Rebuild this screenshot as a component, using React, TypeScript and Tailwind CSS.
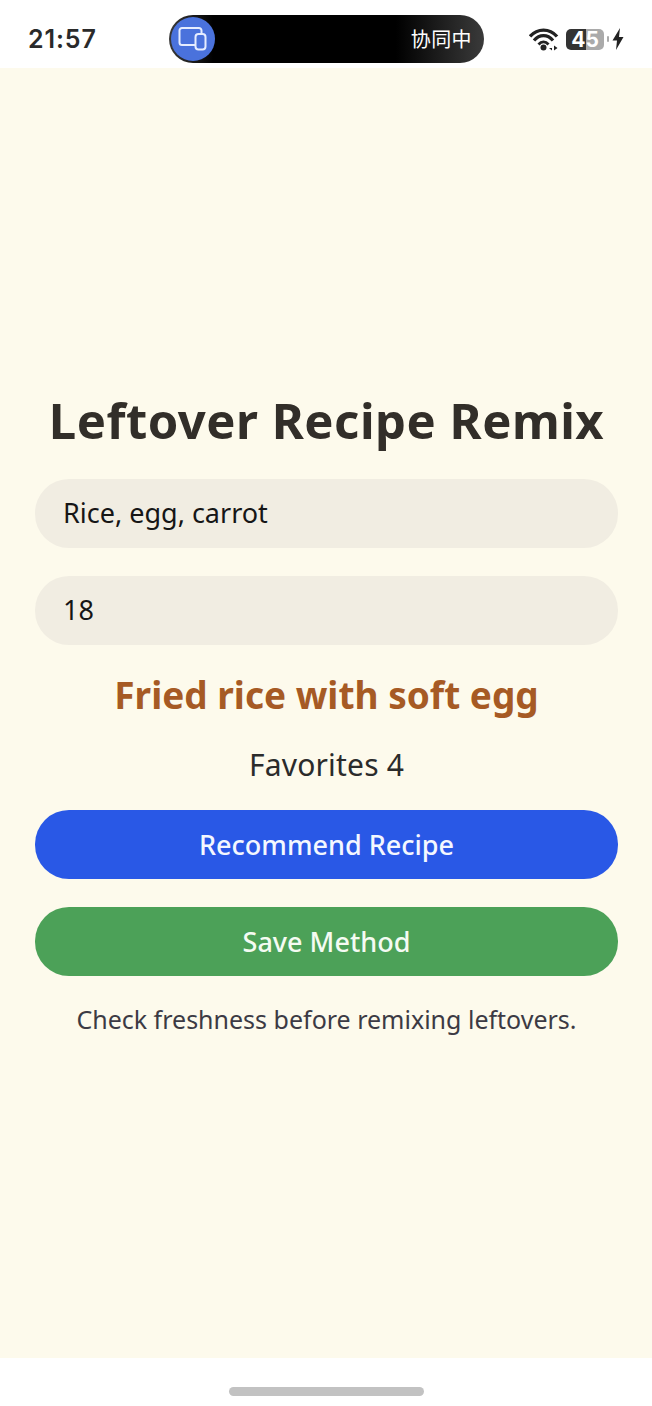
export default function App() {
  return (
    <div className="flex h-[1406px] w-[652px] flex-col overflow-hidden bg-white font-['Noto_Sans','Noto_Sans_CJK_SC',sans-serif]">
      <header className="flex h-[68px] shrink-0 items-center pt-[10px] pl-[28px] pr-[26px]">
        <span className="w-[141px] font-['Inter',sans-serif] text-[25px] font-semibold leading-none tracking-[0.9px] text-[#2a2a2a]">21:57</span>
        <div className="relative flex h-[48px] w-[315px] items-center justify-end rounded-full bg-[linear-gradient(90deg,#3a3a3a_0%,#000_14%,#000_72%,#3a3a3a_100%)] pr-[12px]">
          <div className="absolute left-[2px] top-[2px] flex h-[44px] w-[44px] items-center justify-center rounded-full bg-[#4a72dc]">
            <svg width="30" height="26" viewBox="0 0 30 26" fill="none" stroke="#e6edff" strokeWidth="2">
              <path d="M17 19H4a2.500 2.500 0 0 1-2.500-2.500V4.500A2.500 2.500 0 0 1 4 2h17a2.500 2.500 0 0 1 2.500 2.500V7" strokeLinecap="round" />
              <rect x="17.500" y="8" width="10" height="15.500" rx="3" fill="#4a72dc" />
            </svg>
          </div>
          <span className="font-['Noto_Sans_CJK_SC',sans-serif] text-[20px] leading-none tracking-[0.4px] text-white">协同中</span>
        </div>
        <div className="ml-[45px] flex items-center">
          <svg width="30" height="23" viewBox="0 0 30 23" fill="none" className="shrink-0">
            <path d="M1 8.500C8.500 0 20.500 0 28 8.500" stroke="#222" strokeWidth="3.400" />
            <path d="M5 12.500C10.500 6 18.500 6 24 12.500" stroke="#222" strokeWidth="3.200" />
            <path d="M9.500 16.500C12.500 13 16.500 13 19.500 16.500" stroke="#222" strokeWidth="2.800" />
            <circle cx="14.500" cy="19.500" r="3" fill="#222" />
            <path d="M23 17.500v5l-3-2.500h3zM25 17.500l3.500 2.500-3.500 2.500z" fill="#222" />
          </svg>
          <div className="ml-[7px] flex h-[21px] w-[38px] items-center justify-center rounded-[5px] bg-[linear-gradient(90deg,#333_0%,#333_53%,#aaa_53%,#aaa_100%)] font-['Inter',sans-serif] text-[21px] font-bold leading-none text-white">45</div>
          <div className="ml-[3px] h-[6px] w-[2px] rounded-sm bg-[#aaa]" />
          <svg width="12" height="22" viewBox="0 0 12 22" className="ml-[3px]">
            <path d="M8 0 0.500 12.500h4.500L4 22l7.500-13H7z" fill="#222" />
          </svg>
        </div>
      </header>
      <main className="flex flex-1 flex-col items-center justify-center bg-[#fdfaec] pl-[35px] pr-[34px]">
        <h1 className="mb-[28px] whitespace-nowrap pb-[2px] text-center text-[49px] font-bold leading-[58px] tracking-[0.5px] text-[#322e29]">Leftover Recipe Remix</h1>
        <div className="flex h-[69px] w-full items-center rounded-[34px] bg-[#f1ede2] pb-[2px] pl-[28px] text-[27px] leading-none text-[#161616]">Rice, egg, carrot</div>
        <div className="mt-[28px] flex h-[69px] w-full items-center rounded-[34px] bg-[#f1ede2] pb-[2px] pl-[28px] text-[27px] leading-none text-[#161616]">18</div>
        <p className="mt-[28px] text-center text-[37px] font-bold leading-[44px] text-[#a65a24]">Fried rice with soft egg</p>
        <p className="mt-[28px] pt-[2px] text-center text-[30px] leading-[36px] tracking-[0.2px] text-[#2b2b2b]">Favorites 4</p>
        <button className="mt-[27px] flex h-[69px] w-full items-center justify-center rounded-[34px] bg-[#2958e6] text-[27px] font-medium leading-none text-[#f4f7ff]">Recommend Recipe</button>
        <button className="mt-[28px] flex h-[69px] w-full items-center justify-center rounded-[34px] bg-[#4ca158] text-[27px] font-medium leading-none text-[#f4fbf2]">Save Method</button>
        <p className="mt-[27px] text-center text-[25px] leading-[32px] text-[#3c3a44]">Check freshness before remixing leftovers.</p>
      </main>
      <footer className="flex h-[48px] shrink-0 items-start justify-center pt-[29px]">
        <div className="h-[9px] w-[195px] rounded-full bg-[#c2c2c2]" />
      </footer>
    </div>
  );
}
